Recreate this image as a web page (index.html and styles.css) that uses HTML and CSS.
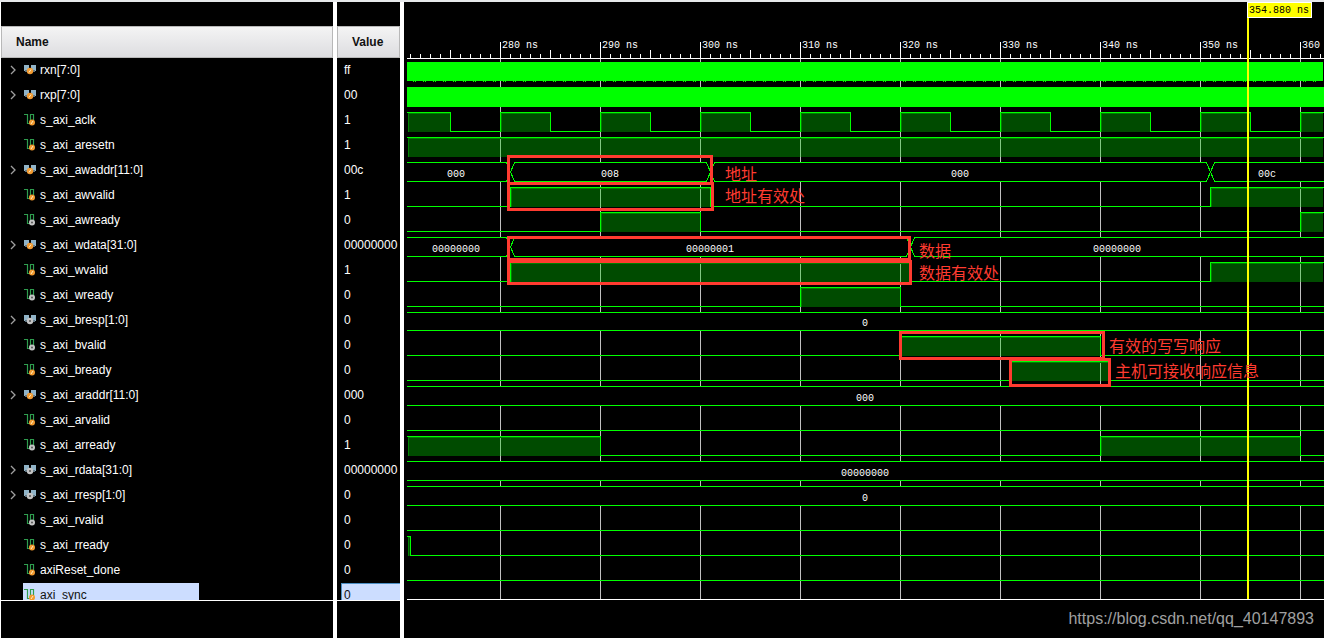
FILE: index.html
```html
<!DOCTYPE html>
<html lang="en">
<head>
<meta charset="utf-8">
<title>Waveform</title>
<link rel="stylesheet" href="styles.css">
</head>
<body>
<svg class="defs" aria-hidden="true">
  <defs>
    <symbol id="bus-in" viewBox="0 0 12 12">
      <path d="M0 1h5v6H0zM7 1h5v6H7z" fill="#91b4c8"/><path d="M1 6h10v2H1z" fill="#5d7482"/>
      <circle cx="6" cy="7" r="3.2" fill="#f29a30"/><path d="M5 8.500l2-3" stroke="#fff1c8"/>
    </symbol>
    <symbol id="bus-out" viewBox="0 0 12 12">
      <path d="M0 1h5v6H0zM7 1h5v6H7z" fill="#91b4c8"/><path d="M1 6h10v2H1z" fill="#5d7482"/>
      <circle cx="6" cy="7" r="3.200" fill="#c4c4c4"/><circle cx="6" cy="7" r="1" fill="#555"/>
    </symbol>
    <symbol id="sig-in" viewBox="0 0 12 12">
      <path d="M0 .5h3.500v9H6.500V.5h3V8" fill="none" stroke="#2f9e4f" stroke-width="1.200"/>
      <circle cx="8" cy="8.500" r="3" fill="#f29a30"/><path d="M7 10l2-3" stroke="#fff1c8"/>
    </symbol>
    <symbol id="sig-out" viewBox="0 0 12 12">
      <path d="M0 .5h3.500v9H6.500V.5h3V8" fill="none" stroke="#2f9e4f" stroke-width="1.200"/>
      <circle cx="8" cy="8.500" r="3" fill="#c4c4c4"/><circle cx="8" cy="8.500" r="1" fill="#555"/>
    </symbol>
    <symbol id="chev" viewBox="0 0 6 10"><path d="M1 1l4 4-4 4" fill="none" stroke="#a0a0a0" stroke-width="1.300"/></symbol>
  </defs>
</svg>
<main class="viewer">
  <section class="panel names">
    <div class="rows">
    <table>
      <thead><tr><th>Name</th></tr></thead>
      <tbody>
        <tr><td><div class="sig"><button class="tog" aria-label="Expand rxn"><svg><use href="#chev"/></svg></button><svg class="ico"><use href="#bus-in"/></svg><span>rxn[7:0]</span></div></td></tr>
        <tr><td><div class="sig"><button class="tog" aria-label="Expand rxp"><svg><use href="#chev"/></svg></button><svg class="ico"><use href="#bus-in"/></svg><span>rxp[7:0]</span></div></td></tr>
        <tr><td><div class="sig leaf"><svg class="ico"><use href="#sig-in"/></svg><span>s_axi_aclk</span></div></td></tr>
        <tr><td><div class="sig leaf"><svg class="ico"><use href="#sig-in"/></svg><span>s_axi_aresetn</span></div></td></tr>
        <tr><td><div class="sig"><button class="tog" aria-label="Expand s_axi_awaddr"><svg><use href="#chev"/></svg></button><svg class="ico"><use href="#bus-in"/></svg><span>s_axi_awaddr[11:0]</span></div></td></tr>
        <tr><td><div class="sig leaf"><svg class="ico"><use href="#sig-in"/></svg><span>s_axi_awvalid</span></div></td></tr>
        <tr><td><div class="sig leaf"><svg class="ico"><use href="#sig-out"/></svg><span>s_axi_awready</span></div></td></tr>
        <tr><td><div class="sig"><button class="tog" aria-label="Expand s_axi_wdata"><svg><use href="#chev"/></svg></button><svg class="ico"><use href="#bus-in"/></svg><span>s_axi_wdata[31:0]</span></div></td></tr>
        <tr><td><div class="sig leaf"><svg class="ico"><use href="#sig-in"/></svg><span>s_axi_wvalid</span></div></td></tr>
        <tr><td><div class="sig leaf"><svg class="ico"><use href="#sig-out"/></svg><span>s_axi_wready</span></div></td></tr>
        <tr><td><div class="sig"><button class="tog" aria-label="Expand s_axi_bresp"><svg><use href="#chev"/></svg></button><svg class="ico"><use href="#bus-out"/></svg><span>s_axi_bresp[1:0]</span></div></td></tr>
        <tr><td><div class="sig leaf"><svg class="ico"><use href="#sig-out"/></svg><span>s_axi_bvalid</span></div></td></tr>
        <tr><td><div class="sig leaf"><svg class="ico"><use href="#sig-in"/></svg><span>s_axi_bready</span></div></td></tr>
        <tr><td><div class="sig"><button class="tog" aria-label="Expand s_axi_araddr"><svg><use href="#chev"/></svg></button><svg class="ico"><use href="#bus-in"/></svg><span>s_axi_araddr[11:0]</span></div></td></tr>
        <tr><td><div class="sig leaf"><svg class="ico"><use href="#sig-in"/></svg><span>s_axi_arvalid</span></div></td></tr>
        <tr><td><div class="sig leaf"><svg class="ico"><use href="#sig-out"/></svg><span>s_axi_arready</span></div></td></tr>
        <tr><td><div class="sig"><button class="tog" aria-label="Expand s_axi_rdata"><svg><use href="#chev"/></svg></button><svg class="ico"><use href="#bus-out"/></svg><span>s_axi_rdata[31:0]</span></div></td></tr>
        <tr><td><div class="sig"><button class="tog" aria-label="Expand s_axi_rresp"><svg><use href="#chev"/></svg></button><svg class="ico"><use href="#bus-out"/></svg><span>s_axi_rresp[1:0]</span></div></td></tr>
        <tr><td><div class="sig leaf"><svg class="ico"><use href="#sig-out"/></svg><span>s_axi_rvalid</span></div></td></tr>
        <tr><td><div class="sig leaf"><svg class="ico"><use href="#sig-in"/></svg><span>s_axi_rready</span></div></td></tr>
        <tr><td><div class="sig leaf"><svg class="ico"><use href="#sig-in"/></svg><span>axiReset_done</span></div></td></tr>
        <tr><td><div class="sig leaf selected"><svg class="ico"><use href="#sig-in"/></svg><span>axi_sync</span></div></td></tr>
      </tbody>
    </table>
    </div>
  </section>
  <section class="panel values">
    <div class="rows">
    <table>
      <thead><tr><th>Value</th></tr></thead>
      <tbody>
        <tr><td>ff</td></tr><tr><td>00</td></tr><tr><td>1</td></tr><tr><td>1</td></tr><tr><td>00c</td></tr>
        <tr><td>1</td></tr><tr><td>0</td></tr><tr><td>00000000</td></tr><tr><td>1</td></tr><tr><td>0</td></tr>
        <tr><td>0</td></tr><tr><td>0</td></tr><tr><td>0</td></tr><tr><td>000</td></tr><tr><td>0</td></tr>
        <tr><td>1</td></tr><tr><td>00000000</td></tr><tr><td>0</td></tr><tr><td>0</td></tr><tr><td>0</td></tr>
        <tr><td>0</td></tr><tr><td><div class="val selected">0</div></td></tr>
      </tbody>
    </table>
    </div>
  </section>
  <section class="waves">
    <svg class="plot" role="img" aria-label="Signal waveforms">
      <defs>
        <pattern id="grid" x="500" y="0" width="100" height="10" patternUnits="userSpaceOnUse"><path class="gridline" d="M0 0h1v10H0z"/></pattern>
        <pattern id="shade" x="500" y="0" width="100" height="10" patternUnits="userSpaceOnUse"><path class="shade" d="M0 0h100v10H0z"/><path class="gridlit" d="M0 0h1v10H0z"/></pattern>
        <pattern id="minor" x="500" y="54" width="10" height="4" patternUnits="userSpaceOnUse"><path class="tick" d="M0 0h1v4H0z"/></pattern>
        <pattern id="mid" x="450" y="50" width="100" height="8" patternUnits="userSpaceOnUse"><path class="tick" d="M0 0h1v8H0z"/></pattern>
        <pattern id="major" x="500" y="42" width="100" height="16" patternUnits="userSpaceOnUse"><path class="tick" d="M0 0h1v16H0z"/></pattern>
        <pattern id="dots" x="413" y="81" width="10" height="1" patternUnits="userSpaceOnUse"><path class="solid" d="M0 0h1v1H0zM2 0h1v1H2z"/></pattern>
      </defs>
      <g transform="translate(-404 -2)">
        <rect x="407" y="59" width="917" height="540" fill="url(#grid)"/>
        <rect x="407" y="54" width="917" height="4" fill="url(#minor)"/>
        <rect x="407" y="50" width="917" height="8" fill="url(#mid)"/>
        <rect x="407" y="42" width="917" height="16" fill="url(#major)"/>
        <rect class="tick" x="407" y="58" width="917" height="1"/>
        <g class="mono">
          <text x="502" y="48">280 ns</text><text x="602" y="48">290 ns</text><text x="702" y="48">300 ns</text>
          <text x="802" y="48">310 ns</text><text x="902" y="48">320 ns</text><text x="1002" y="48">330 ns</text>
          <text x="1102" y="48">340 ns</text><text x="1202" y="48">350 ns</text><text x="1302" y="48">360</text>
        </g>

        <rect class="solid" x="407" y="62" width="916" height="19"/>
        <rect x="407" y="81" width="916" height="1" fill="url(#dots)"/>
        <rect class="solid" x="407" y="87" width="917" height="20"/>

        <g fill="url(#shade)">
          <path d="M408 112h42v20h-42zM500 112h50v20h-50zM600 112h50v20h-50zM700 112h50v20h-50zM800 112h50v20h-50zM900 112h50v20h-50zM1000 112h50v20h-50zM1100 112h50v20h-50zM1200 112h50v20h-50zM1300 112h23v20h-23z"/>
          <path d="M408 137h915v20H408z"/>
          <path d="M510 187h200v20H510zM1210 187h113v20h-113z"/>
          <path d="M600 212h100v20H600zM1300 212h23v20h-23z"/>
          <path d="M510 262h400v20H510zM1210 262h113v20h-113z"/>
          <path d="M800 287h100v20H800z"/>
          <path d="M900 336h200v20H900z"/>
          <path d="M1010 361h100v20h-100z"/>
          <path d="M408 436h192v20H408zM1100 436h200v20h-200z"/>
          <path d="M408 536h2v20h-2z"/>
        </g>
        <g class="edge">
          <path d="M408.500 132v-18.500H450M501.500 132v-18.500H550M601.500 132v-18.500H650M701.500 132v-18.500H750M801.500 132v-18.500H850M901.500 132v-18.500H950M1001.500 132v-18.500H1050M1101.500 132v-18.500H1150M1201.500 132v-18.500H1250M1301.500 132v-18.500H1323"/>
          <path d="M408.500 157v-18.500H1323M511.500 207v-18.500H710M1211.500 207v-18.500H1323M601.500 232v-18.500H700M1301.500 232v-18.500H1323"/>
          <path d="M511.500 282v-18.500H910M1211.500 282v-18.500H1323M801.500 307v-18.500H900M901.500 356v-18.500H1100M1011.500 381v-18.500H1110"/>
          <path d="M408.500 456v-18.500H600M1101.500 456v-18.500H1300M408.500 556v-18.500H410"/>
        </g>
        <g class="wave">
          <path d="M407 112.500H450.500V131.500H500.500V112.500H550.500V131.500H600.500V112.500H650.500V131.500H700.500V112.500H750.500V131.500H800.500V112.500H850.500V131.500H900.500V112.500H950.500V131.500H1000.500V112.500H1050.500V131.500H1100.500V112.500H1150.500V131.500H1200.500V112.500H1250.500V131.500H1300.500V112.500H1324"/>
          <path d="M407 137.500H1324"/>
          <path d="M407 206.500H510.500V187.500H710.500V206.500H1210.500V187.500H1324"/>
          <path d="M407 231.500H600.500V212.500H700.500V231.500H1300.500V212.500H1324"/>
          <path d="M407 281.500H510.500V262.500H910.500V281.500H1210.500V262.500H1324"/>
          <path d="M407 306.500H800.500V287.500H900.500V306.500H1324"/>
          <path d="M407 355.500H900.500V336.500H1100.500V355.500H1324"/>
          <path d="M407 380.500H1010.500V361.500H1110.500V380.500H1324"/>
          <path d="M407 430.500H1324"/>
          <path d="M407 436.500H600.500V455.500H1100.500V436.500H1300.500V455.500H1324"/>
          <path d="M407 530.500H1324"/>
          <path d="M407 536.500H410.500V555.500H1324"/>
          <path d="M407 580.500H1324"/>
        </g>
        <path d="M407 162h917v20H407zM407 237h917v20H407zM407 312h917v19H407zM407 386h917v20H407zM407 461h917v20H407zM407 486h917v20H407z"/>
        <g class="wave">
          <path d="M407 162.500H506.500L510.500 172L514.500 162.500H706.500L710.500 172L714.500 162.500H1206.500L1210.500 172L1214.500 162.500H1324M407 181.500H506.500L510.500 172L514.500 181.500H706.500L710.500 172L714.500 181.500H1206.500L1210.500 172L1214.500 181.500H1324"/>
          <path d="M407 237.500H506.500L510.500 247L514.500 237.500H906.500L910.500 247L914.500 237.500H1324M407 256.500H506.500L510.500 247L514.500 256.500H906.500L910.500 247L914.500 256.500H1324"/>
          <path d="M407 312.500H1324M407 330.500H1324M407 386.500H1324M407 405.500H1324M407 461.500H1324M407 480.500H1324M407 486.500H1324M407 505.500H1324"/>
        </g>
        <g class="mono mid">
          <text x="456" y="177">000</text><text x="610" y="177">008</text><text x="960" y="177">000</text><text x="1267" y="177">00c</text>
          <text x="456" y="252">00000000</text><text x="710" y="252">00000001</text><text x="1117" y="252">00000000</text>
          <text x="865" y="326">0</text><text x="865" y="401">000</text><text x="865" y="476">00000000</text><text x="865" y="501">0</text>
        </g>
        <rect class="tick" x="407" y="599" width="917" height="1"/>

        <rect class="cursor" x="1247" y="2" width="2" height="597"/>
        <rect class="flag" x="1247.500" y="2.500" width="64" height="15"/>
        <text class="mono flagtext" x="1249" y="13">354.880 ns</text>

        <g class="mark">
          <rect x="508.500" y="156.500" width="203" height="27"/>
          <rect x="508.500" y="183.500" width="204" height="26"/>
          <rect x="508.500" y="237.500" width="401" height="22"/>
          <rect x="508.500" y="261.500" width="402" height="22"/>
          <rect x="900.500" y="332.500" width="203" height="26"/>
          <rect x="1010.500" y="359.500" width="99" height="26"/>
        </g>
        <g class="note">
          <text x="725" y="180">地址</text><text x="725" y="202">地址有效处</text>
          <text x="919" y="257">数据</text><text x="919" y="279">数据有效处</text>
          <text x="1109" y="352">有效的写写响应</text><text x="1115" y="377">主机可接收响应信息</text>
        </g>
      </g>
    </svg>
    <footer class="credit">https://blog.csdn.net/qq_40147893</footer>
  </section>
</main>
</body>
</html>
```
FILE: styles.css
```css
* { box-sizing: border-box; }
body {
  margin: 0;
  background: #fff;
  color: #fff;
  font: 12px/16px "Liberation Sans", Arial, sans-serif;
}
.defs { position: absolute; width: 0; height: 0; }
.viewer {
  display: grid;
  grid-template-columns: 332px 63px minmax(0, 1fr);
  column-gap: 4px;
  height: 100vh;
  padding-left: 1px;
  border-top: 2px solid #e6e8ea;
}
.panel {
  display: flex;
  flex-direction: column;
  min-height: 0;
  padding: 24px 0 37px;
  background: #000;
}
.rows {
  flex: 1;
  min-height: 0;
  overflow: hidden;
  border-bottom: 1px solid #fff;
}
table { width: 100%; border-collapse: separate; border-spacing: 0; table-layout: fixed; }
th {
  height: 32px;
  padding: 0 14px;
  border: 1px solid #b8b8b8;
  background: linear-gradient(#f4f4f4, #dddde0);
  color: #111;
  text-align: left;
}
td { height: 25px; padding: 0 0 1px; white-space: nowrap; overflow: hidden; }
.sig { display: flex; align-items: center; gap: 4px; height: 24px; padding-left: 9px; }
.sig.leaf { width: 176px; margin-left: 22px; padding-left: 1px; }
.tog { width: 10px; height: 10px; padding: 0; border: 0; background: none; display: flex; }
.tog svg { width: 6px; height: 10px; }
.ico { width: 12px; height: 12px; }
.values td { padding-left: 7px; }
.values .selected {
  height: 24px;
  margin-left: -3px;
  padding: 3px 2px;
  border: solid #4c8fc4;
  border-width: 1px 0 0 1px;
}
.selected { background: #ccddff; color: #111; }
.waves { display: flex; flex-direction: column; min-height: 0; background: #000; }
.plot { flex: 1; width: 100%; min-height: 0; overflow: hidden; }
.gridline { fill: #c0c0c0; }
.shade { fill: #004b00; }
.gridlit { fill: #82c882; }
.tick { fill: #fff; }
.solid { fill: #0f0; }
.edge { fill: none; stroke: #008000; }
.wave { fill: none; stroke: #0f0; shape-rendering: crispEdges; }
.mono { fill: #fff; font: 10px "Liberation Mono", monospace; }
.mono.mid { text-anchor: middle; }
.cursor { fill: #ff0; }
.flag { fill: #ff0; stroke: #fff; }
.mono.flagtext { fill: #000; }
.mark { fill: none; stroke: #ff3b30; stroke-width: 3; }
.note { fill: #ff3b30; font: 16px "Noto Sans CJK SC", sans-serif; }
.credit {
  height: 38px;
  padding: 9px 10px 0;
  color: #a0a0a0;
  font-size: 16px;
  line-height: 20px;
  text-align: right;
}
```
